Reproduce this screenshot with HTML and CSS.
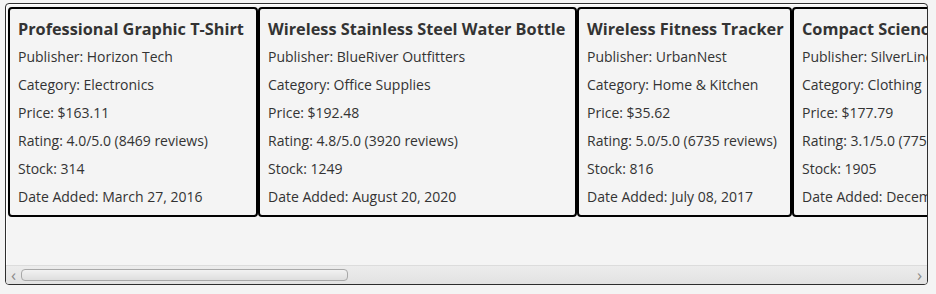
FILE: index.html
```html
<!DOCTYPE html>
<html lang="en">
<head>
    <meta charset="UTF-8">
    <meta name="viewport" content="width=device-width, initial-scale=1.0">
    <title>Product Cards</title>
    <link rel="stylesheet" href="styles.css">
</head>
<body>

    <div class="scroll-pane">
        <div class="card-row">
            <div class="card tshirt">
                <div class="title">Professional Graphic T-Shirt</div>
                <div class="line">Publisher: Horizon Tech</div>
                <div class="line">Category: Electronics</div>
                <div class="line">Price: $163.11</div>
                <div class="line">Rating: 4.0/5.0 (8469 reviews)</div>
                <div class="line">Stock: 314</div>
                <div class="line">Date Added: March 27, 2016</div>
            </div>
            <div class="card bottle">
                <div class="title">Wireless Stainless Steel Water Bottle</div>
                <div class="line">Publisher: BlueRiver Outfitters</div>
                <div class="line">Category: Office Supplies</div>
                <div class="line">Price: $192.48</div>
                <div class="line">Rating: 4.8/5.0 (3920 reviews)</div>
                <div class="line">Stock: 1249</div>
                <div class="line">Date Added: August 20, 2020</div>
            </div>
            <div class="card tracker">
                <div class="title">Wireless Fitness Tracker</div>
                <div class="line">Publisher: UrbanNest</div>
                <div class="line">Category: Home &amp; Kitchen</div>
                <div class="line">Price: $35.62</div>
                <div class="line">Rating: 5.0/5.0 (6735 reviews)</div>
                <div class="line">Stock: 816</div>
                <div class="line">Date Added: July 08, 2017</div>
            </div>
            <div class="card">
                <div class="title">Compact Science Kit</div>
                <div class="line">Publisher: SilverLine Goods</div>
                <div class="line">Category: Clothing</div>
                <div class="line">Price: $177.79</div>
                <div class="line">Rating: 3.1/5.0 (7751 reviews)</div>
                <div class="line">Stock: 1905</div>
                <div class="line">Date Added: December 14, 2019</div>
            </div>
        </div>

        <div class="h-scrollbar">
            <div class="arrow">&lsaquo;</div>
            <div class="track">
                <div class="thumb"></div>
            </div>
            <div class="arrow">&rsaquo;</div>
        </div>
    </div>

</body>
</html>
```

FILE: styles.css
```css
body {
    margin: 0;
    padding: 3px 8px 0 5px;
    font-family: "Open Sans", "Noto Sans", sans-serif;
    background-color: #f4f4f4;
    color: #333;
}

.scroll-pane {
    height: 280px;
    border: 1px solid #2e2e2e;
    border-radius: 4px;
    box-shadow: inset 1px 1px 0 #ffffff;
    display: flex;
    flex-direction: column;
    overflow: hidden;
}

.card-row {
    flex: 1;
    display: flex;
    align-items: flex-start;
    padding: 3px 0 0 2px;
    overflow: hidden;
}

.card {
    flex: none;
    border: 2px solid #000;
    border-radius: 4px;
    padding: 6px 8px 4px 8px;
    white-space: nowrap;
}

/* card widths follow the title length */
.tshirt { width: 230px; }
.bottle { width: 299px; }
.tracker { width: 195px; }

.title {
    font-size: 16.3px;
    font-weight: bold;
    line-height: 28px;
}

.line {
    font-size: 14px;
    line-height: 28px;
}

.h-scrollbar {
    height: 18px;
    display: flex;
    align-items: center;
    border-top: 1px solid #dcdcdc;
    background: linear-gradient(#ececec, #e2e2e2);
}

.arrow {
    width: 15px;
    text-align: center;
    font-size: 17px;
    line-height: 16px;
    color: #8a8a8a;
}

.track {
    flex: 1;
    height: 12px;
}

.thumb {
    width: 325px;
    height: 10px;
    border: 1px solid #a8a8a8;
    border-radius: 4px;
    background: linear-gradient(#f2f2f2, #dedede);
}
```
